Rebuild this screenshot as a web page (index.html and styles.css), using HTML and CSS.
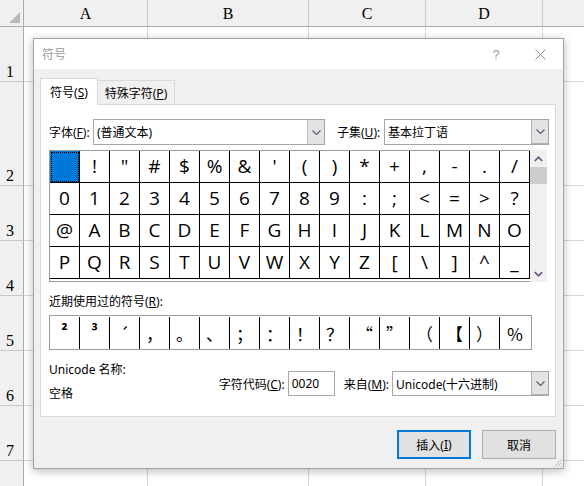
FILE: index.html
```html
<!DOCTYPE html>
<html lang="zh-CN">
<head>
<meta charset="utf-8">
<title>符号</title>
<link rel="stylesheet" href="styles.css">
</head>
<body>
<div class="sheet">
  <div class="corner"><svg width="11" height="11" viewBox="0 0 11 11"><polygon points="11,0 11,11 0,11" fill="#b9b9b9"/></svg></div>
  <div class="colhead">A</div><div class="colhead">B</div><div class="colhead">C</div><div class="colhead">D</div><div class="colhead"></div>
  <div class="rowhead">1</div><div class="cell"></div><div class="cell"></div><div class="cell"></div><div class="cell"></div><div class="cell"></div>
  <div class="rowhead">2</div><div class="cell"></div><div class="cell"></div><div class="cell"></div><div class="cell"></div><div class="cell"></div>
  <div class="rowhead">3</div><div class="cell"></div><div class="cell"></div><div class="cell"></div><div class="cell"></div><div class="cell"></div>
  <div class="rowhead">4</div><div class="cell"></div><div class="cell"></div><div class="cell"></div><div class="cell"></div><div class="cell"></div>
  <div class="rowhead">5</div><div class="cell"></div><div class="cell"></div><div class="cell"></div><div class="cell"></div><div class="cell"></div>
  <div class="rowhead">6</div><div class="cell"></div><div class="cell"></div><div class="cell"></div><div class="cell"></div><div class="cell"></div>
  <div class="rowhead">7</div><div class="cell"></div><div class="cell"></div><div class="cell"></div><div class="cell"></div><div class="cell"></div>
  <div class="rowhead"></div><div class="cell"></div><div class="cell"></div><div class="cell"></div><div class="cell"></div><div class="cell"></div>
</div>

<div class="dialog">
  <div class="titlebar">
    <span class="title">符号</span>
    <span class="help">?</span>
    <span class="close"><svg width="11" height="11" viewBox="0 0 11 11"><path d="M0.5 0.5 L10.5 10.5 M10.5 0.5 L0.5 10.5" stroke="#8c8c8c" stroke-width="1" fill="none"/></svg></span>
  </div>
  <div class="dlgbody">
    <div class="tabs">
      <div class="tab active">符号(<u>S</u>)</div>
      <div class="tab">特殊字符(<u>P</u>)</div>
    </div>
    <div class="panel">
      <div class="fontrow">
        <span class="lbl lbl-font">字体(<u>F</u>):</span>
        <div class="combo combo-font"><span class="combo-text">(普通文本)</span><span class="dd"><svg width="9" height="5" viewBox="0 0 9 5"><path d="M0.5 0.5 L4.5 4.5 L8.5 0.5" stroke="#6a5a78" stroke-width="1.2" fill="none"/></svg></span></div>
        <span class="lbl lbl-subset">子集(<u>U</u>):</span>
        <div class="combo combo-subset"><span class="combo-text">基本拉丁语</span><span class="dd dd-focus"><svg width="9" height="5" viewBox="0 0 9 5"><path d="M0.5 0.5 L4.5 4.5 L8.5 0.5" stroke="#6a5a78" stroke-width="1.2" fill="none"/></svg></span></div>
      </div>
      <div class="charsarea">
        <div class="chargrid">
          <div class="ch sel"></div><div class="ch">!</div><div class="ch">&quot;</div><div class="ch">#</div><div class="ch">$</div><div class="ch">%</div><div class="ch">&amp;</div><div class="ch">'</div><div class="ch">(</div><div class="ch">)</div><div class="ch">*</div><div class="ch">+</div><div class="ch">,</div><div class="ch">-</div><div class="ch">.</div><div class="ch">/</div>
          <div class="ch">0</div><div class="ch">1</div><div class="ch">2</div><div class="ch">3</div><div class="ch">4</div><div class="ch">5</div><div class="ch">6</div><div class="ch">7</div><div class="ch">8</div><div class="ch">9</div><div class="ch">:</div><div class="ch">;</div><div class="ch">&lt;</div><div class="ch">=</div><div class="ch">&gt;</div><div class="ch">?</div>
          <div class="ch">@</div><div class="ch">A</div><div class="ch">B</div><div class="ch">C</div><div class="ch">D</div><div class="ch">E</div><div class="ch">F</div><div class="ch">G</div><div class="ch">H</div><div class="ch">I</div><div class="ch">J</div><div class="ch">K</div><div class="ch">L</div><div class="ch">M</div><div class="ch">N</div><div class="ch">O</div>
          <div class="ch">P</div><div class="ch">Q</div><div class="ch">R</div><div class="ch">S</div><div class="ch">T</div><div class="ch">U</div><div class="ch">V</div><div class="ch">W</div><div class="ch">X</div><div class="ch">Y</div><div class="ch">Z</div><div class="ch">[</div><div class="ch">\</div><div class="ch">]</div><div class="ch">^</div><div class="ch">_</div>
        </div>
        <div class="vscroll">
          <span class="arrow"><svg width="9" height="6" viewBox="0 0 9 6"><path d="M0.8 5 L4.5 1.2 L8.2 5" stroke="#6a4f7c" stroke-width="1.6" fill="none"/></svg></span>
          <span class="thumb"></span>
          <span class="track"></span>
          <span class="arrow"><svg width="9" height="6" viewBox="0 0 9 6"><path d="M0.8 1 L4.5 4.8 L8.2 1" stroke="#6a4f7c" stroke-width="1.6" fill="none"/></svg></span>
        </div>
      </div>
      <div class="reclabel">近期使用过的符号(<u>R</u>):</div>
      <div class="recent">
        <div class="rc sup">²</div><div class="rc sup">³</div><div class="rc">´</div><div class="rc">，</div><div class="rc">。</div><div class="rc">、</div><div class="rc">；</div><div class="rc">：</div><div class="rc">！</div><div class="rc">？</div><div class="rc">“</div><div class="rc">”</div><div class="rc">（</div><div class="rc">【</div><div class="rc">）</div><div class="rc last">％</div>
      </div>
      <div class="info">
        <div class="info-left">
          <div class="line">Unicode 名称:</div>
          <div class="line">空格</div>
        </div>
        <div class="info-right">
          <span class="lbl">字符代码(<u>C</u>):</span>
          <div class="codebox">0020</div>
          <span class="lbl lbl-from">来自(<u>M</u>):</span>
          <div class="combo combo-from"><span class="combo-text">Unicode(十六进制)</span><span class="dd dd-focus"><svg width="9" height="5" viewBox="0 0 9 5"><path d="M0.5 0.5 L4.5 4.5 L8.5 0.5" stroke="#6a5a78" stroke-width="1.2" fill="none"/></svg></span></div>
        </div>
      </div>
    </div>
    <div class="buttons">
      <div class="btn primary">插入(<u>I</u>)</div>
      <div class="btn">取消</div>
    </div>
  </div>
  <svg class="grip" width="9" height="9" viewBox="0 0 9 9"><path d="M8.5 1.5 L1.5 8.5 M8.5 4.5 L4.5 8.5 M8.5 7.5 L7.5 8.5" stroke="#b5b5b5" stroke-width="1" fill="none"/></svg>
</div>
</body>
</html>
```

FILE: styles.css
```css
* { box-sizing: border-box; }
html, body { margin: 0; padding: 0; }
body {
  width: 584px;
  height: 486px;
  overflow: hidden;
  position: relative;
  background: #fff;
  font-family: "Noto Sans", "Noto Sans CJK SC", sans-serif;
  color: #000;
}
u { text-decoration: underline; text-underline-offset: 1px; }

/* ---------- spreadsheet background ---------- */
.sheet {
  display: grid;
  grid-template-columns: 24px 124px 161px 117px 117px 42px;
  grid-template-rows: 27px 55px 104px 55px 55px 55px 55px 55px 26px;
}
.cell {
  border-right: 1px solid #d6d6d6;
  border-bottom: 1px solid #d6d6d6;
}
.corner {
  background: #f0f0f0;
  border-right: 1px solid #ababab;
  border-bottom: 1px solid #ababab;
  display: flex;
  align-items: flex-end;
  justify-content: flex-end;
  padding: 0 3px 3px 0;
}
.colhead {
  background: #f0f0f0;
  border-right: 1px solid #c8c8c8;
  border-bottom: 1px solid #ababab;
  display: flex;
  align-items: center;
  justify-content: center;
  font: 16px "Liberation Serif", serif;
  padding-top: 2px;
}
.rowhead {
  background: #f0f0f0;
  border-right: 1px solid #ababab;
  border-bottom: 1px solid #c8c8c8;
  display: flex;
  align-items: flex-end;
  justify-content: flex-start;
  font: 16px "Liberation Serif", serif;
  line-height: 16px;
  padding: 0 0 1px 6px;
}

/* ---------- dialog ---------- */
.dialog {
  position: absolute;
  left: 33px;
  top: 38px;
  width: 531px;
  height: 431px;
  border: 1px solid #a3a3a3;
  background: #f0f0f0;
  box-shadow: 0 2px 9px rgba(0, 0, 0, 0.28);
  display: flex;
  flex-direction: column;
  font-size: 12px;
}
.titlebar {
  height: 30px;
  background: #fff;
  display: flex;
  align-items: center;
  padding-left: 8px;
  flex: none;
}
.title { color: #9a9a9a; font-size: 12px; }
.help {
  margin-left: auto;
  color: #9a9a9a;
  font: 13px "Liberation Sans", sans-serif;
  width: 10px;
  text-align: center;
}
.close {
  margin-left: 34px;
  margin-right: 17px;
  display: flex;
}

.dlgbody {
  flex: 1;
  padding: 9px 7px 0 6px;
  display: flex;
  flex-direction: column;
}
.tabs {
  display: flex;
  align-items: flex-start;
  height: 26px;
}
.tab {
  height: 24px;
  margin-top: 2px;
  width: 77px;
  background: #f0f0f0;
  border: 1px solid #d9d9d9;
  border-left: none;
  border-bottom: none;
  display: flex;
  align-items: center;
  justify-content: center;
  padding-top: 1px;
}
.tab.active {
  width: 58px;
  height: 27px;
  margin-top: 0;
  background: #fff;
  border-left: 1px solid #d9d9d9;
  position: relative;
  z-index: 1;
  padding-top: 0;
}

.panel {
  height: 313px;
  background: #fff;
  border: 1px solid #d9d9d9;
  padding: 14px 6px 0 8px;
  display: flex;
  flex-direction: column;
}

.fontrow {
  display: flex;
  align-items: center;
  height: 26px;
}
.lbl { white-space: nowrap; }
.lbl-font { width: 44px; }
.lbl-subset { margin-left: 12px; width: 47px; }
.combo {
  height: 26px;
  border: 1px solid #a6a6a6;
  background: #fff;
  display: flex;
  align-items: stretch;
}
.combo-font { width: 232px; }
.combo-subset { width: 165px; }
.combo-text {
  flex: 1;
  display: flex;
  align-items: center;
  padding-left: 3px;
  font-size: 12px;
}
.dd {
  width: 17px;
  background: #e3e3e3;
  border-left: 1px solid #bcbcbc;
  display: flex;
  align-items: center;
  justify-content: center;
}
.dd-focus {
  border: 1px solid #b0b0b0;
  border-right: none;
  border-top: none;
}

.charsarea {
  margin-top: 5px;
  display: flex;
  height: 132px;
}
.chargrid {
  width: 481px;
  border-left: 1px solid #9c9c9c;
  border-top: 1px solid #9c9c9c;
  border-bottom: 1px solid #9c9c9c;
  display: grid;
  grid-template-columns: repeat(16, 30px);
  grid-template-rows: repeat(4, 32px);
  align-content: start;
}
.ch {
  border-right: 1px solid #000;
  border-bottom: 1px solid #000;
  display: flex;
  align-items: center;
  justify-content: center;
  font: 19px "Open Sans", sans-serif;
  line-height: 1;
  color: #000;
}
.ch.sel {
  background: #0078d7;
  outline: 1px dotted #000;
  outline-offset: -2px;
}
.vscroll {
  width: 17px;
  background: #f0f0f0;
  display: flex;
  flex-direction: column;
  align-items: stretch;
}
.arrow {
  height: 17px;
  display: flex;
  align-items: center;
  justify-content: center;
}
.thumb {
  height: 17px;
  background: #cdcdcd;
}
.track { flex: 1; }

.reclabel {
  margin-top: 12px;
  line-height: 16px;
  height: 16px;
}
.recent {
  margin-top: 5px;
  width: 483px;
  height: 35px;
  border: 1px solid #9c9c9c;
  padding: 1px 0 0 0;
  display: flex;
  align-items: flex-start;
}
.rc {
  width: 30px;
  height: 32px;
  border-right: 1px solid #000;
  display: flex;
  align-items: center;
  justify-content: center;
  font: 17px "Noto Sans CJK SC", sans-serif;
  line-height: 1;
}
.rc.sup {
  font: bold 16px "Noto Sans", sans-serif;
  align-items: flex-start;
  padding-top: 3px;
}
.rc.last { border-right: none; }

.info {
  margin-top: 12px;
  display: flex;
  align-items: flex-start;
}
.info-left {
  display: flex;
  flex-direction: column;
  gap: 8px;
}
.info-left .line { line-height: 16px; }
.info-right {
  margin-left: auto;
  margin-top: 9px;
  display: flex;
  align-items: center;
  height: 25px;
}
.codebox {
  margin-left: 3px;
  width: 47px;
  height: 25px;
  border: 1px solid #a6a6a6;
  display: flex;
  align-items: center;
  padding-left: 3px;
}
.lbl-from { margin-left: 9px; }
.combo-from {
  margin-left: 3px;
  width: 157px;
  height: 25px;
}

.buttons {
  margin-top: 13px;
  display: flex;
  justify-content: flex-end;
  gap: 11px;
  padding-right: 0;
}
.btn {
  width: 74px;
  height: 29px;
  background: #e1e1e1;
  border: 1px solid #adadad;
  display: flex;
  align-items: center;
  justify-content: center;
}
.btn.primary {
  border: 2px solid #0078d7;
}

.grip {
  position: absolute;
  right: 1px;
  bottom: 1px;
}
```
